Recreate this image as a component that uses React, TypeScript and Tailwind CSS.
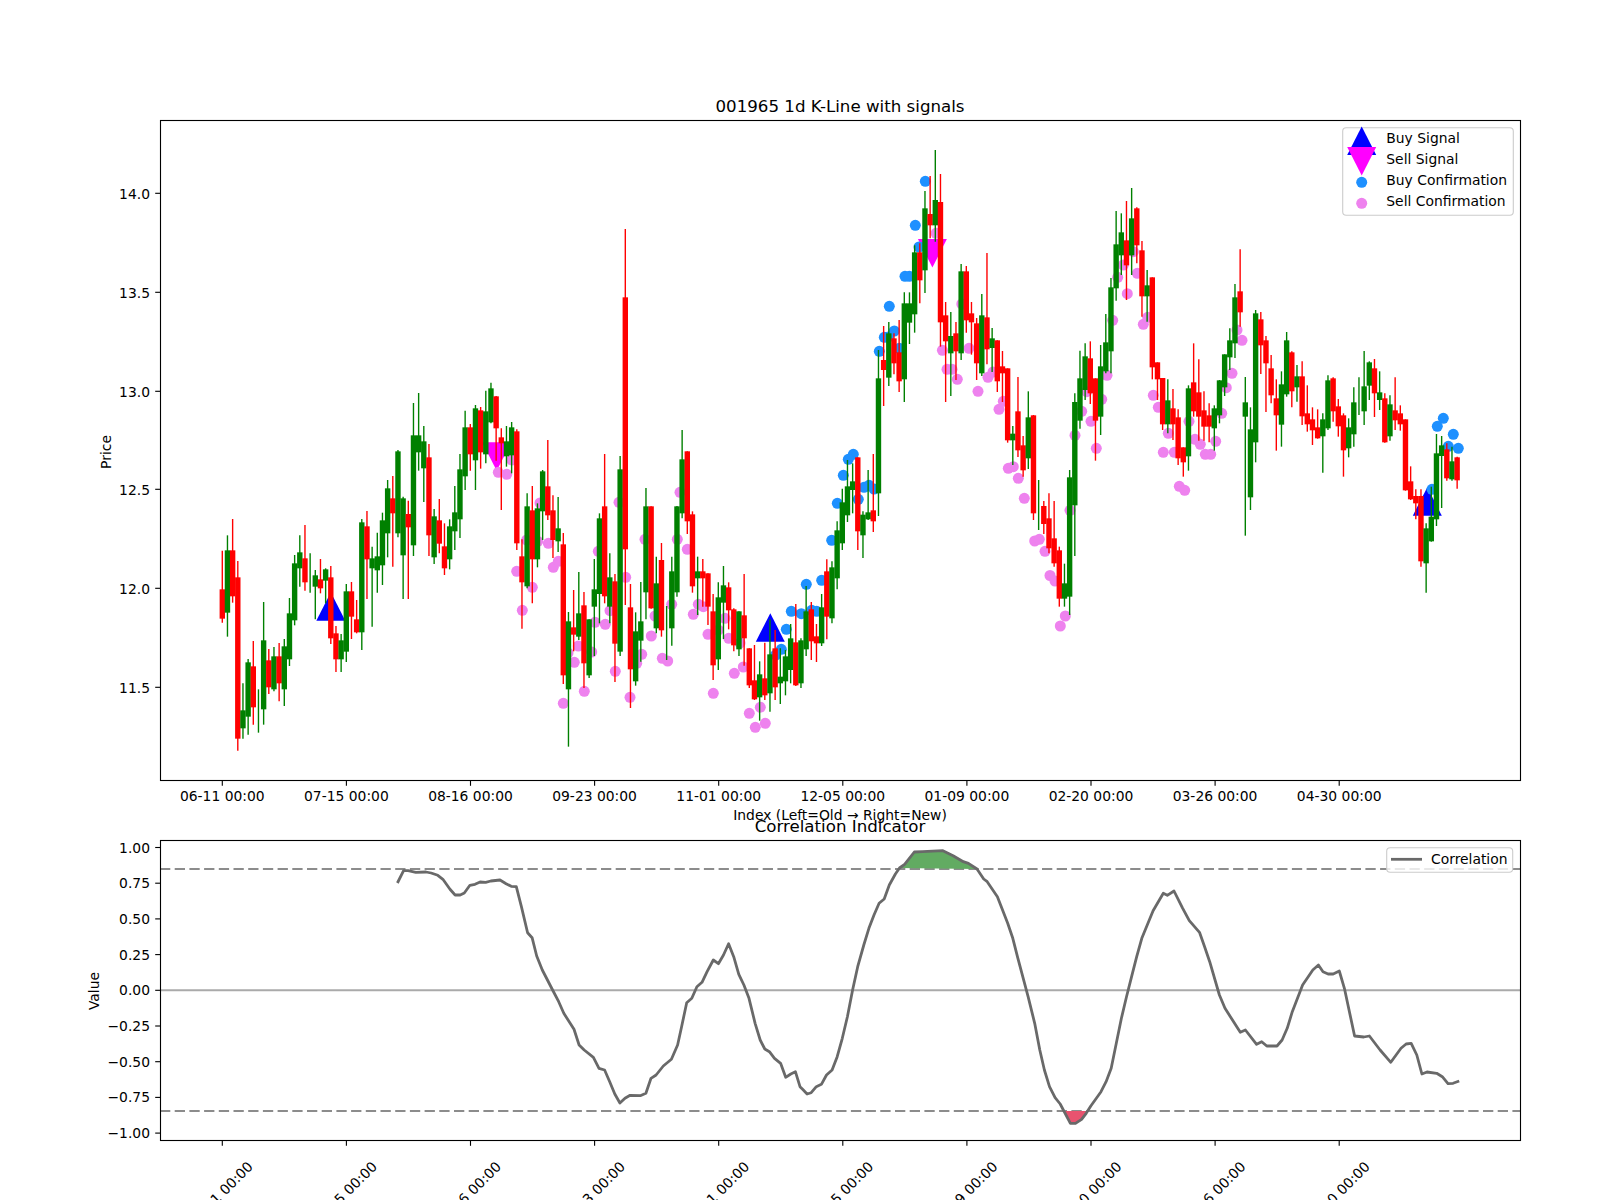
import React from "react";

type Row = [string, number, number, number, number];

// candle rows: colour, wick top, body top, body bottom, wick bottom
// y values are 3x pixels counted from `top`, so they can be read straight off a zoomed crop
const groups: { top: number; rows: Row[] }[] = [
  {
    top: 340,
    rows: [
      ["r", 632, 748, 836, 848], ["g", 586, 631, 818, 890], ["r", 537, 631, 769, 788], ["r", 663, 712, 1196, 1232],
      ["g", 1030, 1111, 1165, 1196], ["g", 957, 967, 1130, 1184], ["r", 903, 979, 1102, 1154], ["g", 1048, 1100, 1100, 1178],
      ["g", 786, 901, 1108, 1154], ["r", 927, 961, 1042, 1062], ["g", 921, 949, 1048, 1054], ["r", 909, 949, 1030, 1084],
      ["g", 897, 919, 1048, 1098], ["g", 774, 820, 958, 978], ["g", 645, 670, 841, 856], ["g", 586, 637, 685, 740],
      ["r", 555, 655, 727, 752], ["g", 640, 700, 700, 758], ["g", 690, 706, 740, 838], ["r", 657, 718, 745, 760],
      ["g", 685, 688, 722, 790], ["r", 678, 712, 895, 912], ["r", 858, 880, 958, 996], ["g", 882, 901, 958, 996],
      ["g", 732, 754, 935, 966], ["r", 726, 754, 830, 897], ["r", 780, 838, 877, 880], ["g", 537, 547, 877, 930],
      ["r", 513, 559, 658, 777], ["g", 620, 655, 685, 860], ["g", 578, 649, 691, 758], ["g", 518, 541, 676, 735],
      ["g", 420, 445, 580, 652], ["r", 408, 475, 520, 680], ["g", 330, 334, 580, 592], ["g", 470, 475, 646, 777],
      ["r", 482, 522, 562, 777], ["g", 189, 286, 616, 648], ["g", 159, 286, 337, 392], ["g", 258, 304, 385, 486],
      ["r", 312, 352, 586, 648], ["g", 507, 529, 652, 672], ["r", 477, 541, 611, 640], ["r", 550, 619, 685, 705],
      ["g", 538, 559, 658, 688], ["g", 438, 517, 574, 630], ["g", 342, 388, 538, 594], ["g", 212, 262, 409, 450],
      ["r", 252, 262, 343, 392], ["g", 195, 205, 361, 450], ["r", 201, 211, 337, 386], ["g", 152, 214, 343, 370],
      ["g", 128, 145, 247, 250], ["r", 168, 169, 265, 362], ["r", 265, 292, 310, 510], ["g", 258, 304, 349, 380],
      ["g", 246, 262, 346, 400], ["r", 268, 274, 610, 630], ["r", 598, 649, 727, 866], ["g", 460, 499, 739, 745],
      ["r", 438, 511, 658, 790], ["g", 490, 505, 658, 682], ["g", 390, 394, 514, 600], ["r", 300, 439, 526, 540],
      ["r", 466, 511, 600, 654], ["g", 471, 565, 604, 636], ["r", 579, 613, 1006, 1032], ["g", 816, 844, 1048, 1220],
      ["r", 750, 862, 884, 934], ["g", 696, 820, 890, 900], ["r", 756, 796, 970, 1044], ["g", 838, 838, 1006, 1014],
      ["g", 657, 748, 800, 948], ["g", 520, 535, 762, 850], ["r", 342, 499, 769, 790], ["g", 640, 712, 800, 850],
      ["r", 702, 724, 911, 1026], ["g", 348, 388, 935, 948], ["r", -333, -128, 628, 795], ["r", 732, 802, 988, 1104],
      ["g", 817, 874, 1024, 1037], ["g", 726, 844, 902, 965], ["g", 444, 499, 757, 838], ["r", 499, 499, 805, 806],
      ["g", 650, 730, 865, 880], ["r", 609, 660, 871, 890], ["g", 798, 880, 880, 960], ["g", 650, 694, 865, 917],
      ["g", 498, 499, 757, 770], ["g", 270, 358, 520, 535], ["r", 334, 334, 544, 582], ["r", 514, 523, 739, 758],
      ["g", 650, 694, 715, 825], ["r", 657, 694, 715, 800], ["r", 700, 700, 800, 855], ["r", 762, 814, 976, 1020],
      ["g", 727, 772, 958, 990], ["g", 678, 736, 788, 897], ["r", 727, 742, 811, 868], ["r", 805, 808, 916, 934],
      ["g", 814, 814, 928, 948], ["r", 702, 826, 895, 977], ["r", 925, 925, 1036, 1044], ["r", 915, 1021, 1078, 1080],
      ["g", 964, 1003, 1072, 1142], ["r", 908, 1015, 1066, 1080], ["g", 838, 943, 1060, 1115], ["r", 870, 925, 1042, 1080],
      ["g", 925, 1010, 1030, 1092], ["g", 930, 949, 1024, 1066], ["g", 852, 895, 990, 1030], ["r", 792, 907, 1036, 1038],
      ["g", 895, 901, 1030, 1044], ["g", 738, 814, 928, 948], ["r", 786, 808, 904, 960], ["r", 852, 889, 910, 966],
      ["g", 762, 802, 910, 918], ["r", 658, 694, 830, 898], ["g", 664, 682, 835, 850], ["g", 544, 571, 715, 748],
      ["g", 446, 487, 610, 630], ["g", 360, 439, 526, 546], ["g", 370, 424, 450, 520], ["r", 352, 352, 574, 630],
      ["g", 514, 524, 586, 654], ["g", 390, 517, 538, 540], ["r", 342, 511, 544, 576], ["g", 30, 115, 460, 528],
    ],
  },
  {
    top: 130,
    rows: [
      ["r", 588, 690, 720, 828], ["g", 576, 610, 743, 768], ["r", 610, 625, 700, 733], ["r", 570, 667, 754, 786],
      ["g", 487, 520, 748, 816], ["g", 487, 520, 578, 642], ["g", 346, 367, 553, 608], ["r", 340, 367, 451, 520],
      ["g", 183, 235, 421, 489], ["r", 138, 252, 286, 325], ["g", 60, 210, 286, 335], ["r", 132, 216, 577, 650],
      ["r", 516, 556, 634, 816], ["g", 546, 618, 670, 798], ["r", 576, 610, 664, 750], ["g", 402, 424, 670, 690],
      ["r", 408, 424, 571, 608], ["r", 516, 550, 577, 674], ["r", 564, 580, 700, 750], ["g", 492, 556, 730, 738],
      ["r", 369, 562, 658, 703], ["g", 594, 625, 654, 726], ["r", 631, 631, 754, 786], ["r", 663, 709, 730, 816],
      ["r", 715, 715, 931, 938], ["g", 888, 911, 931, 1005], ["r", 741, 844, 961, 981], ["r", 918, 946, 1021, 1040],
      ["g", 784, 862, 985, 1017], ["r", 855, 856, 1150, 1170], ["g", 1050, 1120, 1120, 1200], ["r", 1113, 1128, 1182, 1212],
    ],
  },
  {
    top: 200,
    rows: [
      ["r", 880, 955, 1045, 1060], ["r", 903, 1015, 1090, 1100], ["r", 1040, 1051, 1196, 1220], ["g", 1091, 1150, 1196, 1220],
      ["g", 810, 832, 1190, 1245], ["g", 580, 606, 916, 1068], ["g", 452, 535, 662, 686], ["g", 430, 469, 570, 600],
      ["r", 424, 475, 580, 612], ["r", 535, 535, 662, 782], ["g", 435, 499, 650, 705], ["g", 342, 427, 514, 520],
      ["g", 234, 262, 454, 520], ["g", 33, 133, 265, 302], ["g", 40, 97, 166, 225], ["r", 3, 121, 196, 300],
      ["g", -36, 55, 166, 225], ["r", 22, 25, 136, 190], ["r", 123, 151, 289, 350], ["g", 210, 256, 289, 365],
      ["r", 232, 232, 502, 538], ["r", 487, 487, 538, 600], ["r", 534, 534, 673, 690], ["g", 538, 601, 673, 700],
      ["r", 567, 625, 673, 720], ["r", 628, 652, 775, 795], ["r", 742, 742, 787, 830], ["g", 556, 565, 769, 812],
      ["r", 430, 547, 634, 650], ["r", 478, 577, 650, 722], ["r", 574, 631, 680, 722], ["r", 610, 646, 680, 727],
      ["g", 616, 625, 685, 752], ["g", 540, 541, 646, 670], ["g", 463, 463, 562, 588], ["g", 385, 421, 472, 510],
      ["g", 252, 292, 430, 474], ["r", 148, 274, 337, 380], ["g", 531, 607, 650, 1007], ["g", 622, 688, 892, 930],
      ["g", 330, 340, 727, 787], ["r", 336, 358, 436, 522], ["r", 408, 421, 490, 636], ["r", 465, 505, 586, 610],
      ["r", 538, 595, 646, 752], ["g", 514, 553, 674, 740], ["g", 396, 421, 583, 590], ["r", 454, 457, 574, 622],
      ["g", 495, 529, 562, 605], ["r", 484, 529, 649, 675], ["r", 556, 640, 673, 695], ["r", 622, 658, 691, 735],
      ["r", 628, 682, 715, 716], ["g", 640, 658, 709, 818], ["g", 526, 541, 685, 690], ["r", 532, 535, 634, 665],
      ["r", 597, 619, 679, 710], ["r", 640, 646, 751, 830], ["g", 655, 682, 745, 772], ["g", 562, 607, 703, 740],
      ["g", 532, 590, 590, 645], ["g", 453, 559, 634, 675], ["g", 484, 487, 557, 600], ["r", 477, 505, 580, 651],
      ["g", 514, 577, 600, 630], ["r", 580, 595, 727, 728], ["g", 586, 613, 709, 722], ["r", 532, 631, 661, 690],
      ["r", 616, 640, 673, 692], ["r", 658, 658, 871, 872], ["r", 799, 844, 898, 900], ["r", 868, 888, 910, 958],
      ["r", 868, 888, 1084, 1100], ["g", 970, 985, 1090, 1178], ["g", 860, 950, 1024, 1025], ["g", 702, 760, 958, 978],
      ["g", 708, 736, 768, 924], ["r", 730, 748, 835, 842], ["g", 740, 784, 838, 842], ["r", 770, 772, 841, 866],
    ],
  },
];

const candles = groups.flatMap((g) =>
  g.rows.map(([c, wt, bt, bb, wb]) => ({
    color: c === "r" ? "#ff0000" : "#008000",
    wickTop: g.top + wt / 3,
    bodyTop: g.top + bt / 3,
    bodyBottom: g.top + bb / 3,
    wickBottom: g.top + wb / 3,
  }))
);

const candleX = (i: number) => 222.3 + 5.1667 * i;

const blueDots = [
  [925.3, 181.3], [915.3, 225.3], [919, 247], [905, 276.3], [909.3, 276.3], [889.3, 306.3], [894.3, 331], [884.3, 337.3],
  [888.3, 337], [899.3, 348.3], [879.3, 351.3], [853.3, 454.3], [848.3, 459.3], [843.3, 475.3], [837.3, 503.3],
  [831.7, 540.3], [821.7, 580.3], [806.3, 584.3], [791.3, 611.3], [801.3, 613.7], [811.7, 610.3], [816.7, 611.3],
  [786.3, 629.3], [781.3, 649.3], [775.7, 655], [864, 487.3], [869, 485.3], [874, 489], [858.3, 499.3],
  [1443.3, 418.3], [1437.3, 426.3], [1453.3, 434.3], [1458.3, 448.3], [1448.3, 446.3], [1432, 489.3],
];

const violetDots = [
  [498.3, 472.3], [506.7, 474.3], [511.7, 460], [516.7, 571.3], [522.3, 610.3], [532.3, 587.3], [526.7, 540], [537.7, 541.3],
  [548.3, 543.3], [540, 503], [553.3, 567.3], [558.3, 561.3], [563.3, 703.3], [568, 653], [574.3, 662.3], [578.3, 646],
  [584.3, 691.3], [591.7, 652], [595, 622.3], [605.3, 624.3], [610, 610.7], [598.3, 551.3], [619, 502.3], [625.7, 577.3],
  [615.3, 671.3], [630, 697.3], [641.7, 654.3], [651.3, 636], [655, 616], [645, 539.3], [636.7, 663.3], [662.3, 658.3],
  [667.7, 661], [671.7, 604.3], [677.3, 539.3], [687.3, 549.3], [680, 492.3], [693.3, 614.3], [698.3, 604.3], [703.3, 606.7],
  [713.3, 693.3], [708, 634.3], [718.3, 630], [725, 618.3], [728.7, 638.3], [734.3, 673.3], [743.3, 667], [740, 643],
  [749.3, 713.3], [755.3, 727.3], [760.3, 707.3], [765.3, 723.3], [936, 233.3], [942.4, 350.3], [961.8, 304], [969, 348.3],
  [947, 369.3], [952, 369.3], [957.3, 379.3], [978, 391.3], [988, 377.3], [993, 372], [999, 409.3], [1003.3, 401.3],
  [1008.3, 468.3], [1013.3, 466.7], [1018.3, 478.3], [1024.3, 498.3], [1034.7, 541], [1039.3, 539.3], [1045, 551.3],
  [1050, 575.5], [1055, 581], [1065.3, 616], [1060.3, 626], [1070, 510.3], [1075, 435.3], [1081.7, 411.3], [1091, 421.3],
  [1096.3, 448.3], [1086.7, 391.7], [1101.7, 399.3], [1107, 375.3], [1112.7, 320.3], [1117.7, 277.3], [1123.3, 265],
  [1127.3, 293.7], [1133.3, 251.7], [1137.3, 273.3], [1143.3, 324.3], [1147.7, 317.3], [1153.3, 395.3], [1158.3, 407.3],
  [1168.3, 433.3], [1163.3, 452.3], [1174.3, 452.3], [1189, 421.3], [1179.3, 486.3], [1184.7, 490.3], [1195, 439.3],
  [1200.3, 444.3], [1205.3, 454.3], [1210.7, 454.3], [1215.7, 441.3], [1221.7, 413.3], [1226.3, 387.7], [1232, 373.3],
  [1237, 330], [1242, 340.3],
];

const upMarker = (x: number, base: number) => `${x - 14.5},${base} ${x + 14.5},${base} ${x},${base - 28.5}`;
const downMarker = (x: number, top: number) => `${x - 14.5},${top} ${x + 14.5},${top} ${x},${top + 28.5}`;

const tickXs = Array.from({ length: 10 }, (_, k) => 222.3 + 124.1 * k);
const dateLabels = ["06-11", "07-15", "08-16", "09-23", "11-01", "12-05", "01-09", "02-20", "03-26", "04-30"];
const priceTicks = [
  ["14.0", 193.3], ["13.5", 292.3], ["13.0", 391.3], ["12.5", 489.3], ["12.0", 588.3], ["11.5", 687.3],
] as const;

const valueY = (v: number) => 990.3 - 142.8 * v;
const valueTicks = [
  ["1.00", 1], ["0.75", 0.75], ["0.50", 0.5], ["0.25", 0.25], ["0.00", 0],
  ["\u22120.25", -0.25], ["\u22120.50", -0.5], ["\u22120.75", -0.75], ["\u22121.00", -1],
] as const;

// line read off two crops: x scale 1.96 (second crop starts at 800), y scale 3 from 800
const corrLeft = [
  [779, 249], [791, 212], [800, 212], [815, 217], [835, 216], [845, 219], [858, 226], [868, 238], [882, 268], [892, 285],
  [902, 285], [910, 279], [921, 256], [931, 253], [941, 246], [952, 247], [962, 243], [980, 240], [992, 251], [1002, 259],
  [1012, 260], [1022, 320], [1034, 398], [1043, 413], [1052, 468], [1063, 510], [1083, 570], [1095, 605], [1105, 640],
  [1125, 688], [1135, 735], [1145, 750], [1163, 772], [1174, 805], [1185, 810], [1195, 845], [1205, 882], [1215, 909],
  [1225, 895], [1235, 886], [1255, 887], [1266, 880], [1276, 835], [1286, 825], [1300, 798], [1316, 778], [1328, 735],
  [1336, 680], [1346, 608], [1356, 595], [1366, 560], [1376, 547], [1386, 515], [1398, 480], [1408, 491], [1418, 465],
  [1428, 431], [1438, 470], [1448, 523], [1458, 555], [1468, 595], [1480, 670], [1490, 720], [1499, 747], [1508, 755],
  [1518, 775], [1530, 790], [1540, 832], [1550, 822], [1559, 815],
];
const corrRight = [
  [0, 860], [5, 868], [14, 882], [22, 878], [32, 860], [42, 853], [52, 825], [63, 810], [73, 770], [83, 715], [93, 650],
  [103, 570], [113, 500], [125, 435], [135, 385], [145, 345], [155, 310], [165, 297], [175, 255], [187, 222], [195, 204],
  [205, 193], [224, 156], [240, 155], [280, 152], [300, 167], [320, 185], [330, 190], [347, 207], [360, 237], [367, 245],
  [387, 290], [407, 370], [417, 415], [427, 475], [447, 590], [460, 670], [470, 750], [479, 810], [489, 860], [500, 893],
  [510, 912], [530, 970], [540, 970], [552, 958], [561, 940], [570, 918], [590, 875], [600, 845], [610, 805], [620, 730],
  [630, 655], [640, 590], [650, 530], [660, 470], [670, 415], [692, 332], [712, 280], [720, 286], [733, 273], [750, 325],
  [763, 362], [783, 397], [793, 440], [803, 485], [822, 585], [833, 625], [863, 697], [873, 690], [895, 733], [905, 725],
  [915, 738], [935, 738], [945, 720], [955, 685], [965, 635], [985, 555], [1005, 510], [1016, 495], [1025, 515], [1035, 522],
  [1045, 522], [1057, 513], [1067, 565], [1087, 708], [1105, 711], [1116, 708], [1137, 750], [1158, 787], [1178, 745],
  [1188, 732], [1198, 730], [1209, 765], [1219, 822], [1229, 816], [1248, 820], [1259, 830], [1270, 851], [1280, 850],
  [1292, 843],
];
const corrPoints = [
  ...corrLeft.map(([x, y]) => [x / 1.96, 800 + y / 3]),
  ...corrRight.map(([x, y]) => [800 + x / 1.96, 800 + y / 3]),
];
const corrPath = corrPoints.map(([x, y]) => `${x.toFixed(1)},${y.toFixed(1)}`).join(" ");

const rightCrop = (pts: number[][]) =>
  pts.map(([x, y]) => `${(800 + x / 1.96).toFixed(1)},${(800 + y / 3).toFixed(1)}`).join(" ");

const highBand = rightCrop(corrRight.slice(20, 29));
const lowBand = rightCrop([[519, 933], [530, 970], [540, 970], [552, 958], [562, 933]]);

function PricePanel() {
  return (
    <svg width="1600" height="820" viewBox="0 0 1600 820" className="block shrink-0 overflow-visible">
      <text x="840" y="112" textAnchor="middle" className="text-[16.67px]">001965 1d K-Line with signals</text>

      <polygon points={upMarker(330.8, 620.7)} fill="#0000ff" />
      <polygon points={upMarker(770.3, 641.7)} fill="#0000ff" />
      <polygon points={upMarker(1427.3, 515.7)} fill="#0000ff" />
      <polygon points={downMarker(496.7, 442.3)} fill="#ff00ff" />
      <polygon points={downMarker(932.4, 239)} fill="#ff00ff" />

      {violetDots.map(([x, y], i) => <circle key={i} cx={x} cy={y} r="5.5" fill="#ee82ee" />)}
      {blueDots.map(([x, y], i) => <circle key={i} cx={x} cy={y} r="5.5" fill="#1e90ff" />)}

      {candles.map((c, i) => (
        <g key={i}>
          <line x1={candleX(i)} x2={candleX(i)} y1={c.wickTop} y2={c.wickBottom} stroke={c.color} strokeWidth="1.39" />
          {c.bodyBottom > c.bodyTop && (
            <rect x={candleX(i) - 2.7} y={c.bodyTop} width="5.4" height={c.bodyBottom - c.bodyTop} fill={c.color} />
          )}
        </g>
      ))}

      <rect x="160.5" y="120.5" width="1360" height="660" fill="none" stroke="#000" strokeWidth="1.11" />

      {priceTicks.map(([label, y]) => (
        <g key={label}>
          <line x1="155.2" x2="160" y1={y} y2={y} stroke="#000" strokeWidth="1.11" />
          <text x="150" y={y + 5.5} textAnchor="end" className="text-[13.89px]">{label}</text>
        </g>
      ))}
      {tickXs.map((x, k) => (
        <g key={x}>
          <line x1={x} x2={x} y1="781" y2="785.8" stroke="#000" strokeWidth="1.11" />
          <text x={x} y="801" textAnchor="middle" className="text-[13.89px]">{dateLabels[k]} 00:00</text>
        </g>
      ))}
      <text x="840" y="820" textAnchor="middle" className="text-[13.89px]">Index (Left=Old → Right=New)</text>
      <text transform="translate(111 452) rotate(-90)" textAnchor="middle" className="text-[13.89px]">Price</text>

      <rect x="1342.7" y="127.7" width="170.6" height="87.6" rx="3.5" fill="#fff" fillOpacity="0.8" stroke="#cccccc" strokeWidth="1.11" />
      <polygon points={upMarker(1361.7, 155)} fill="#0000ff" />
      <polygon points={downMarker(1361.7, 147)} fill="#ff00ff" />
      <circle cx="1361.7" cy="182.3" r="5.5" fill="#1e90ff" />
      <circle cx="1361.7" cy="203.3" r="5.5" fill="#ee82ee" />
      <text x="1386.3" y="143" className="text-[13.89px]">Buy Signal</text>
      <text x="1386.3" y="164" className="text-[13.89px]">Sell Signal</text>
      <text x="1386.3" y="185" className="text-[13.89px]">Buy Confirmation</text>
      <text x="1386.3" y="206" className="text-[13.89px]">Sell Confirmation</text>
    </svg>
  );
}

function CorrelationPanel() {
  return (
    <svg width="1600" height="380" viewBox="0 820 1600 380" className="block shrink-0 overflow-visible">
      <text x="840" y="832" textAnchor="middle" className="text-[16.67px]">Correlation Indicator</text>

      <line x1="160" x2="1520" y1="869" y2="869" stroke="#8c8c8c" strokeWidth="2.2" strokeDasharray="10.3 4.4" />
      <line x1="160" x2="1520" y1="1111" y2="1111" stroke="#8c8c8c" strokeWidth="2.2" strokeDasharray="10.3 4.4" />
      <line x1="160" x2="1520" y1={valueY(0)} y2={valueY(0)} stroke="#aaaaaa" strokeWidth="2.08" />

      <polygon points={highBand} fill="#62ab62" />
      <polygon points={lowBand} fill="#e8536f" />
      <polyline points={corrPath} fill="none" stroke="#696969" strokeWidth="2.78" strokeLinejoin="round" />

      <rect x="160.5" y="840.5" width="1360" height="300" fill="none" stroke="#000" strokeWidth="1.11" />

      {valueTicks.map(([label, v]) => (
        <g key={label}>
          <line x1="155.2" x2="160" y1={valueY(v)} y2={valueY(v)} stroke="#000" strokeWidth="1.11" />
          <text x="150" y={valueY(v) + 5} textAnchor="end" className="text-[13.89px]">{label}</text>
        </g>
      ))}
      {tickXs.map((x, k) => (
        <g key={x}>
          <line x1={x} x2={x} y1="1141" y2="1145.8" stroke="#000" strokeWidth="1.11" />
          <text
            transform={`translate(${x - 2} 1194) rotate(-45)`}
            textAnchor="middle"
            dominantBaseline="central"
            className="text-[13.89px]"
          >
            {dateLabels[k]} 00:00
          </text>
        </g>
      ))}
      <text transform="translate(99 991) rotate(-90)" textAnchor="middle" className="text-[13.89px]">Value</text>

      <rect x="1386.7" y="847.7" width="126" height="24.6" rx="3.5" fill="#fff" fillOpacity="0.8" stroke="#cccccc" strokeWidth="1.11" />
      <line x1="1391" x2="1422" y1="859.3" y2="859.3" stroke="#696969" strokeWidth="2.78" />
      <text x="1431" y="864.3" className="text-[13.89px]">Correlation</text>
    </svg>
  );
}

export default function App() {
  return (
    <div className="flex h-[1200px] w-[1600px] flex-col overflow-hidden bg-white font-['DejaVu_Sans',sans-serif] text-black">
      <PricePanel />
      <CorrelationPanel />
    </div>
  );
}
